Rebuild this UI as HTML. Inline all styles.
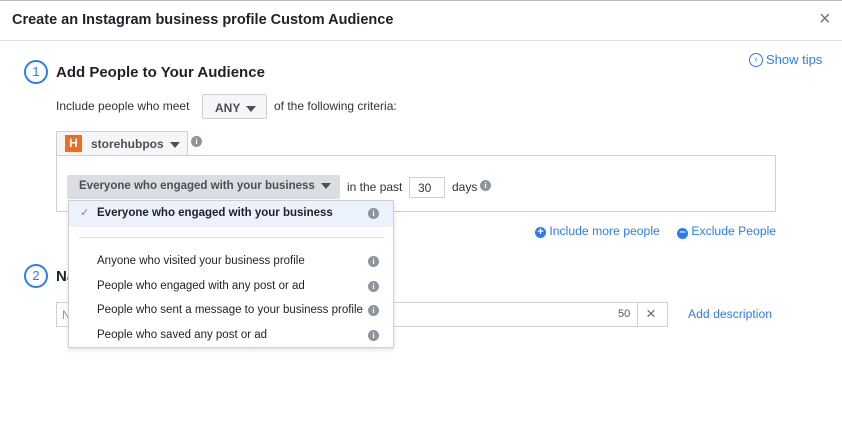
<!DOCTYPE html>
<html><head><style>
*{box-sizing:border-box;margin:0;padding:0}
body{width:842px;height:427px;background:#fff;font-family:"Liberation Sans",Arial,sans-serif;color:#1d2129;position:relative;overflow:hidden;font-size:12px}
.a{position:absolute;white-space:nowrap}
.info{position:absolute;width:11px;height:11px;border-radius:50%;background:#8d949e;color:#fff;font-size:8px;font-weight:bold;text-align:center;line-height:11px;font-family:"Liberation Serif",serif}
.tri{display:inline-block;width:0;height:0;border-left:5px solid transparent;border-right:5px solid transparent;border-top:6px solid #4b4f56;vertical-align:middle;margin-left:6px}
.lnk{color:#2d7bf4;font-size:12.2px}
</style></head><body>
<div class="a" style="left:0;top:0;width:842px;height:1px;background:#bbb"></div>
<div class="a" style="left:12px;top:12px;font-size:14.5px;font-weight:bold">Create an Instagram business profile Custom Audience</div>
<div class="a" style="left:819px;top:8px;font-size:20px;color:#777">×</div>
<div class="a" style="left:0;top:40px;width:842px;height:1px;background:#dddfe2"></div>

<div class="a" style="left:749px;top:53px;width:14px;height:14px;border:1.3px solid #2d7bf4;border-radius:50%;color:#2d7bf4;font-size:9px;line-height:11px;text-align:center">‹</div>
<div class="a lnk" style="left:766px;top:52px;font-size:13px">Show tips</div>

<div class="a" style="left:24px;top:60px;width:24px;height:24px;border:2px solid #2d7bf4;border-radius:50%;color:#2d7bf4;text-align:center;line-height:20px;font-size:13px">1</div>
<div class="a" style="left:56px;top:64px;font-size:15px;font-weight:bold">Add People to Your Audience</div>

<div class="a" style="left:56px;top:99px;font-size:12px;color:#333">Include people who meet</div>
<div class="a" style="left:202px;top:94px;width:65px;height:25px;background:#f5f6f7;border:1px solid #ccd0d5;border-radius:2px;font-weight:bold;color:#4b4f56;padding:6px 0 0 12px">ANY<span class="tri"></span></div>
<div class="a" style="left:274px;top:99px;font-size:12px;color:#333">of the following criteria:</div>

<div class="a" style="left:56px;top:131px;width:132px;height:25px;background:#f5f6f7;border:1px solid #ccd0d5;border-bottom:none;border-radius:2px 2px 0 0"></div>
<div class="a" style="left:65px;top:135px;width:17px;height:17px;background:#f26b21;color:#fff;font-weight:bold;font-size:12px;text-align:center;line-height:17px">H</div>
<div class="a" style="left:91px;top:137px;font-weight:bold;color:#4b4f56">storehubpos<span class="tri"></span></div>
<div class="info" style="left:191px;top:136px">i</div>

<div class="a" style="left:56px;top:155px;width:720px;height:57px;border:1px solid #ccd0d5"></div>
<div class="a" style="left:67px;top:175px;width:273px;height:24px;background:#dadde1;border-radius:2px;padding:5px 0 0 12px;font-weight:bold;color:#4b4f56;font-size:11.5px">Everyone who engaged with your business<span class="tri"></span></div>
<div class="a" style="left:347px;top:180px;color:#333">in the past</div>
<div class="a" style="left:409px;top:177px;width:36px;height:21px;border:1px solid #ccd0d5;padding:3px 0 0 8px;color:#333">30</div>
<div class="a" style="left:452px;top:180px;color:#333">days</div>
<div class="info" style="left:480px;top:180px">i</div>

<div class="a lnk" style="left:535px;top:224px"><span style="display:inline-block;width:11px;height:11px;border-radius:50%;background:#2d7bf4;color:#fff;font-size:11px;line-height:10px;text-align:center;font-weight:bold;vertical-align:0">+</span> Include more people</div>
<div class="a lnk" style="left:677px;top:224px"><span style="display:inline-block;width:11px;height:11px;border-radius:50%;background:#2d7bf4;color:#fff;font-size:11px;line-height:9px;text-align:center;font-weight:bold">–</span> Exclude People</div>

<div class="a" style="left:24px;top:264px;width:24px;height:24px;border:2px solid #2d7bf4;border-radius:50%;color:#2d7bf4;text-align:center;line-height:20px;font-size:13px">2</div>
<div class="a" style="left:56px;top:268px;font-size:15px;font-weight:bold">Na</div>
<div class="a" style="left:56px;top:302px;width:612px;height:25px;border:1px solid #ccd0d5"></div>
<div class="a" style="left:62px;top:308px;color:#999">N</div>
<div class="a" style="left:618px;top:308px;color:#555;font-size:11px">50</div>
<div class="a" style="left:637px;top:302px;width:1px;height:25px;background:#ccd0d5"></div>
<div class="a" style="left:646px;top:304px;color:#666;font-size:17px">×</div>
<div class="a lnk" style="left:688px;top:307px">Add description</div>

<div class="a" style="left:68px;top:200px;width:326px;height:148px;background:#fff;border:1px solid #ccd0d5;box-shadow:0 2px 4px rgba(0,0,0,.12)"></div>
<div class="a" style="left:69px;top:201px;width:324px;height:26px;background:#ecf2fc"></div>
<div class="a" style="left:80px;top:206px;color:#888;font-size:11px">✓</div>
<div class="a" style="left:97px;top:207px;font-weight:bold;font-size:11.5px">Everyone who engaged with your business</div>
<div class="info" style="left:368px;top:208px">i</div>
<div class="a" style="left:79px;top:237px;width:304px;height:1px;background:#dadde1"></div>
<div class="a" style="left:97px;top:255px;font-size:11.5px">Anyone who visited your business profile</div>
<div class="info" style="left:368px;top:256px">i</div>
<div class="a" style="left:97px;top:280px;font-size:11.5px">People who engaged with any post or ad</div>
<div class="info" style="left:368px;top:281px">i</div>
<div class="a" style="left:97px;top:304px;font-size:11.5px">People who sent a message to your business profile</div>
<div class="info" style="left:368px;top:305px">i</div>
<div class="a" style="left:97px;top:329px;font-size:11.5px">People who saved any post or ad</div>
<div class="info" style="left:368px;top:330px">i</div>
</body></html>
